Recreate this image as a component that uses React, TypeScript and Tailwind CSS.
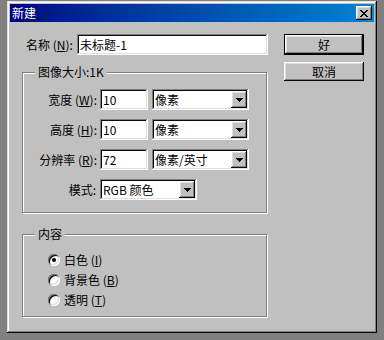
import type { ReactNode } from 'react'

const raised =
  'shadow-[inset_-1px_-1px_#0a0a0a,inset_1px_1px_#ffffff,inset_-2px_-2px_#808080,inset_2px_2px_#dfdfdf]'
const sunken =
  'shadow-[inset_-1px_-1px_#ffffff,inset_1px_1px_#808080,inset_-2px_-2px_#dfdfdf,inset_2px_2px_#0a0a0a]'

export default function App() {
  return (
    <div className="w-[384px] h-[340px] bg-[#808080] pt-px pl-[7px] font-['Noto_Sans_CJK_SC',sans-serif] text-[12px] leading-[14px] text-black">
      <div
        className={`w-[370px] h-[332px] bg-[#c0c0c0] p-[3px] shadow-[inset_-1px_-1px_#0a0a0a,inset_1px_1px_#dfdfdf,inset_-2px_-2px_#808080,inset_2px_2px_#ffffff]`}
      >
        <div className="h-[18px] flex items-center justify-between bg-gradient-to-r from-[#000080] to-[#1084d0] pl-[2px] pr-[2px]">
          <span className="text-white">新建</span>
          <button
            className={`w-[16px] h-[14px] bg-[#c0c0c0] flex items-center justify-center ${raised}`}
          >
            <svg width="8" height="7" viewBox="0 0 8 7">
              <path
                d="M0 0h2v1h1v1h2V1h1V0h2v1H7v1H6v1H5v1h1v1h1v1h1v1H6V6H5V5H3v1H2v1H0V6h1V5h1V4h1V3H2V2H1V1H0z"
                fill="#000"
              />
            </svg>
          </button>
        </div>

        <div className="flex pl-[12px] pt-[12px]">
          <div className="w-[246px] flex flex-col">
            <div className="h-[21px] flex items-center">
              <span className="w-[55px] pl-[4px] whitespace-nowrap">
                名称 (<u>N</u>):
              </span>
              <Field className="w-[191px]">未标题-1</Field>
            </div>

            <GroupBox title="图像大小:1K" className="mt-[10px]">
              <div className="flex flex-col gap-[9px] pt-[10px] pb-[12px]">
                <SizeRow label="宽度" keyChar="W" value="10" unit="像素" />
                <SizeRow label="高度" keyChar="H" value="10" unit="像素" />
                <SizeRow label="分辨率" keyChar="R" value="72" unit="像素/英寸" />
                <div className="flex items-center h-[21px]">
                  <span className="w-[75px] text-right pr-[2px]">模式:</span>
                  <Select className="w-[97px] ml-[2px]">RGB 颜色</Select>
                </div>
              </div>
            </GroupBox>

            <GroupBox title="内容" className="mt-[14px]">
              <div className="flex flex-col pl-[25px] pt-[9px] pb-[6px]">
                <Radio checked>
                  白色 (<u>I</u>)
                </Radio>
                <Radio>
                  背景色 (<u>B</u>)
                </Radio>
                <Radio>
                  透明 (<u>T</u>)
                </Radio>
              </div>
            </GroupBox>
          </div>

          <div className="ml-[16px] w-[80px] flex flex-col gap-[7px]">
            <button
              className={`h-[21px] border border-black bg-[#c0c0c0] ${raised} flex items-center justify-center`}
            >
              好
            </button>
            <button
              className={`h-[19px] bg-[#c0c0c0] ${raised} flex items-center justify-center`}
            >
              取消
            </button>
          </div>
        </div>
      </div>
    </div>
  )
}

function GroupBox({
  title,
  className,
  children,
}: {
  title: string
  className?: string
  children: ReactNode
}) {
  return (
    <fieldset
      className={`w-[245px] border border-[#808080] shadow-[inset_1px_1px_#ffffff,1px_1px_#ffffff] ${className ?? ''}`}
    >
      <legend className="ml-[12px] px-[3px] bg-[#c0c0c0] leading-[14px]">
        {title}
      </legend>
      {children}
    </fieldset>
  )
}

function SizeRow({
  label,
  keyChar,
  value,
  unit,
}: {
  label: string
  keyChar: string
  value: string
  unit: string
}) {
  return (
    <div className="flex items-center h-[21px]">
      <span className="w-[75px] text-right pr-[1px] whitespace-nowrap">
        {label} (<u>{keyChar}</u>):
      </span>
      <Field className="w-[48px] ml-[2px]">{value}</Field>
      <Select className="w-[97px] ml-[4px]">{unit}</Select>
    </div>
  )
}

function Field({
  className,
  children,
}: {
  className?: string
  children: ReactNode
}) {
  return (
    <div
      className={`h-[21px] bg-white ${sunken} flex items-center pl-[3px] ${className ?? ''}`}
    >
      {children}
    </div>
  )
}

function Select({
  className,
  children,
}: {
  className?: string
  children: ReactNode
}) {
  return (
    <div
      className={`h-[21px] bg-white ${sunken} flex items-center justify-between p-[2px] pl-[3px] ${className ?? ''}`}
    >
      <span>{children}</span>
      <div
        className={`w-[16px] h-[17px] bg-[#c0c0c0] ${raised} flex items-center justify-center`}
      >
        <svg width="7" height="4" viewBox="0 0 7 4">
          <path d="M0 0h7v1H6v1H5v1H4v1H3V3H2V2H1V1H0z" fill="#000" />
        </svg>
      </div>
    </div>
  )
}

function Radio({
  checked,
  children,
}: {
  checked?: boolean
  children: ReactNode
}) {
  return (
    <div className="h-[20px] flex items-center">
      <div className="w-[12px] h-[12px] rounded-full bg-white shadow-[inset_1px_1px_#808080,inset_-1px_-1px_#ffffff,inset_2px_2px_#0a0a0a,inset_-2px_-2px_#dfdfdf] flex items-center justify-center">
        {checked && <div className="w-[4px] h-[4px] rounded-full bg-black" />}
      </div>
      <span className="ml-[4px]">{children}</span>
    </div>
  )
}
